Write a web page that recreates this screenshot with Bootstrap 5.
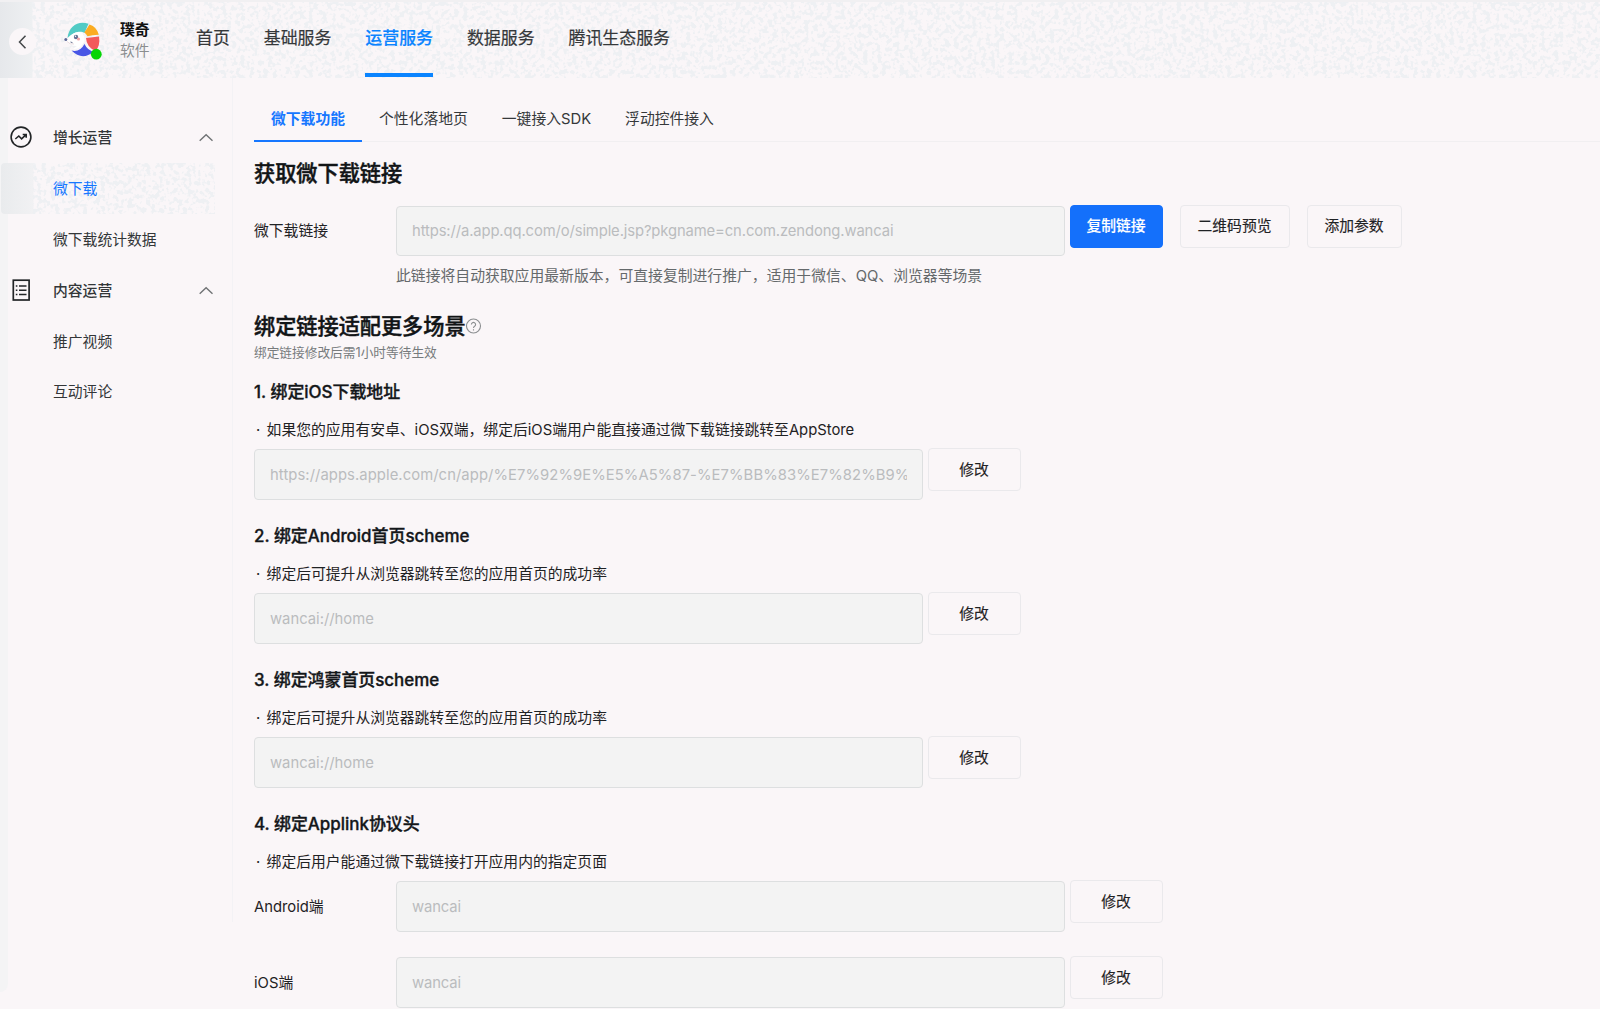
<!DOCTYPE html>
<html lang="zh-CN">
<head>
<meta charset="utf-8">
<meta name="viewport" content="width=device-width, initial-scale=1">
<title>微下载</title>
<link href="https://cdn.jsdelivr.net/npm/bootstrap@5.3.0/dist/css/bootstrap.min.css" rel="stylesheet">
<style>
body{font-family:Inter,"Noto Sans CJK SC",sans-serif;font-size:14.8px;line-height:22px;color:#1f2224;background:#faf6f8;height:1009px;overflow:hidden}
.topbar{height:78px;border-top:2px solid #f1f0f2;background:linear-gradient(90deg,#e6e8eb,#eef0f2 32px,transparent 33px)}
.grain{left:0;top:0;width:100%;height:100%;z-index:0}
.topbar>*:not(.grain){z-index:1}
.back-btn{width:27px;height:27px;margin-left:9px;margin-top:3px;background:#faf6f8}
.logo-box{width:40px;height:40px;margin-left:28px;margin-top:2px}
.app-name{margin-left:16px;width:76px;line-height:21px;padding-top:2px}
.app-name b{font-weight:700;color:#111}
.app-kind{color:#8b8e90}
.main-nav{gap:33.9px;font-size:16.93px}
.main-nav .nav-link{padding:0 0 3px;height:76px;line-height:73px;color:#35383a;margin:0;-webkit-text-stroke:.2px currentColor}
.main-nav .nav-link.active{color:#0a84ff;font-weight:500;border-bottom:4px solid #0a84ff;padding:0;height:75px}
.side{width:233px;height:844px;padding-top:34px;border-right:1px solid #f3f2f5}
.edge{left:0;top:78px;width:8px;bottom:17px;background:#f4f4f5;border-bottom-right-radius:8px;z-index:-1}
.side-row{height:50.8px;padding-left:53px;margin-right:17px;color:#333638}
.side-row span{padding-top:2px}
.side-head{padding-left:9px;padding-right:1px;font-weight:500}
.side-head .ico{width:24px;margin-right:20px}
.side-row.active{color:#1677ff;background:linear-gradient(90deg,#e9ebed,#f1f1f3 32px,transparent 33px);border-radius:4px;margin-left:1px;padding-left:52px}
.side-row.active span{z-index:1}
.page{padding-left:21px}
.sub-tabs{margin-top:17px;height:47px;border-bottom:1px solid #f1eff1}
.sub-tabs .nav-link{padding:0 17px;height:47px;line-height:48px;color:#35383a;border-radius:0}
.sub-tabs .nav-link.active{color:#1677ff;font-weight:700;border-bottom:2px solid #1677ff}
.title-lg{font-size:21.17px;font-weight:500;color:#111416;margin:0;line-height:32px;-webkit-text-stroke:.45px currentColor}
.title-lg svg{-webkit-text-stroke:0}
.title-first{height:63.5px;line-height:63px}
.title-second{margin-top:15px}
.row-field{height:50.5px}
.field-label{width:142px;padding-top:1px}
.field-box.form-control{width:669px;height:50.5px;padding:1px 15px 0;font-size:14.8px;color:#babcbe;background:#f3f3f3;border:1px solid #dddfe0;border-radius:4px;margin-right:4.5px}
.url-tight{letter-spacing:-.115px}
.url-wide{letter-spacing:.075px}
.act{height:43px;width:93px;padding:0;font-size:14.8px;border-radius:4px;border:1px solid #eae9ec;color:#1f2224;background:transparent;margin-top:-.6px;-webkit-text-stroke:.15px currentColor}
.act-main{background:#1470fb;border-color:#1470fb;color:#fff;font-weight:500}
.act-qr{width:110px;margin-left:17px}
.act-add{width:95px;margin-left:17px}
.hint{height:39px;line-height:40px;margin-left:142px;color:#65696b;letter-spacing:.03px}
.note{font-size:12.7px;line-height:21px;height:20px;color:#777b7d}
.step{font-size:16.93px;font-weight:500;line-height:30px;margin:21.5px 0 4px;color:#14171a;-webkit-text-stroke:.35px currentColor}
.note+.step{margin-top:15px}
.tip{height:38px;line-height:38px;white-space:pre}
.tip i{display:inline-block;width:12.6px;padding-left:2px;font-style:normal}
.row-gap-top{margin-top:25.5px}
</style>
</head>
<body>
<svg width="0" height="0" class="position-absolute">
  <filter id="speck" x="0" y="0" width="100%" height="100%" color-interpolation-filters="sRGB">
    <feTurbulence type="fractalNoise" baseFrequency="0.22" numOctaves="2" seed="4"/>
    <feColorMatrix values="0 0 0 0 .933  0 0 0 0 .941  0 0 0 0 .953  9 0 0 0 -4.4"/>
  </filter>
</svg>
<header class="topbar d-flex position-relative">
  <svg class="grain position-absolute"><rect x="32" width="100%" height="100%" filter="url(#speck)"/></svg>
  <div class="d-flex align-items-center position-relative">
    <a href="#" class="back-btn rounded-circle d-flex align-items-center justify-content-center"><svg width="12" height="16" viewBox="0 0 12 16" fill="none" stroke="#444749" stroke-width="1.5"><path d="M8.500 1.800 2.500 8l6 6.200"/></svg></a>
    <svg class="logo-box" viewBox="0 0 40 40">
      <path d="M3.500 17C5 5 14-.5 24.500 2.800L20.500 12C16 9 8 12 3.500 17Z" fill="#52cbc5"/>
      <path d="M25.500 3.500Q33 6 34.800 13.800Q28 14 23.500 15.300Q22 12.500 20.300 11.500Z" fill="#fbac22"/>
      <path d="M22 17 35 15.500q1.500 9-3.500 14.500Q22.500 26 22 17Z" fill="#f3595b"/>
      <path d="M7.500 29.500Q16 31.500 20.500 23 23 28.500 29.500 31 18 40 7.500 29.500Z" fill="#4856e5"/>
      <path d="M3.500 18.500C8 12 14 9 18.500 12.500 23.500 19 18 28.500 9 28L13 25Q5 25 2.500 20Z" fill="#fff"/>
      <path d="M3 20.500Q6 24 10 23" fill="none" stroke="#dfcbd0" stroke-width=".7"/>
      <circle cx="1.800" cy="18.500" r="1.500" fill="#5d6998"/><circle cx="12" cy="16" r="2.200" fill="#667194"/><circle cx="11.500" cy="15.300" r=".7" fill="#fff"/><path d="m6.500 21 2 .7" stroke="#66708f"/><circle cx="14.500" cy="18" r="1.600" fill="#f3a5a9"/>
      <circle cx="32.300" cy="33.200" r="5.400" fill="#06d506"/>
    </svg>
    <div class="app-name"><b>璞奇</b><div class="app-kind">软件</div></div>
  </div>
  <nav class="nav main-nav position-relative">
    <a class="nav-link" href="#">首页</a><a class="nav-link" href="#">基础服务</a><a class="nav-link active" href="#">运营服务</a><a class="nav-link" href="#">数据服务</a><a class="nav-link" href="#">腾讯生态服务</a>
  </nav>
</header>
<div class="edge position-absolute"></div>
<div class="d-flex">
  <aside class="side flex-shrink-0">
    <div class="side-row side-head d-flex align-items-center">
      <svg class="ico" height="24" viewBox="0 0 24 24" fill="none" stroke="#222527" stroke-width="1.600"><circle cx="12" cy="12" r="9.900"/><path d="m6.300 14 3.500-3 2.800 2.800 4.200-4M13.700 9.500h3.500v3.300"/></svg>
      <span>增长运营</span>
      <svg class="ms-auto" width="16" height="16" viewBox="0 0 16 16" fill="none" stroke="#707375" stroke-width="1.400"><path d="m1.700 11.800 6.400-6 6.400 6"/></svg>
    </div>
    <div class="side-row active d-flex align-items-center position-relative"><svg class="grain position-absolute"><rect x="32" width="100%" height="100%" filter="url(#speck)"/></svg><span class="position-relative">微下载</span></div>
    <div class="side-row d-flex align-items-center"><span>微下载统计数据</span></div>
    <div class="side-row side-head d-flex align-items-center">
      <svg class="ico" height="24" viewBox="0 0 24 24" fill="none" stroke="#222527" stroke-width="1.700"><rect x="4.300" y="2.200" width="15.800" height="19.800"/><path stroke-width="1.500" d="M10 8h7.500M10 12.300h7.500M10 16.600h7.500M6.800 8h1.600M6.800 12.300h1.600M6.800 16.600h1.600"/></svg>
      <span>内容运营</span>
      <svg class="ms-auto" width="16" height="16" viewBox="0 0 16 16" fill="none" stroke="#707375" stroke-width="1.400"><path d="m1.700 11.800 6.400-6 6.400 6"/></svg>
    </div>
    <div class="side-row d-flex align-items-center"><span>推广视频</span></div>
    <div class="side-row d-flex align-items-center"><span>互动评论</span></div>
  </aside>
  <main class="page flex-grow-1">
    <nav class="nav sub-tabs">
      <a class="nav-link active" href="#">微下载功能</a><a class="nav-link" href="#">个性化落地页</a><a class="nav-link" href="#">一键接入SDK</a><a class="nav-link" href="#">浮动控件接入</a>
    </nav>
    <h2 class="title-lg title-first">获取微下载链接</h2>
    <div class="row-field d-flex align-items-start">
      <label class="field-label align-self-center">微下载链接</label>
      <input class="form-control field-box url-tight" disabled value="https://a.app.qq.com/o/simple.jsp?pkgname=cn.com.zendong.wancai">
      <button class="btn act act-main">复制链接</button>
      <button class="btn act act-qr">二维码预览</button>
      <button class="btn act act-add">添加参数</button>
    </div>
    <div class="hint">此链接将自动获取应用最新版本，可直接复制进行推广，适用于微信、QQ、浏览器等场景</div>
    <h2 class="title-lg title-second d-flex align-items-center">绑定链接适配更多场景<svg width="16" height="16" viewBox="0 0 16 16" fill="none" stroke="#8b8e90" stroke-width="1.100"><circle cx="7.500" cy="8" r="7"/><path d="M5.400 6.500a2.100 2.100 0 1 1 3.200 1.800Q7.500 9 7.500 10M7.500 11.200v1.200"/></svg></h2>
    <div class="note">绑定链接修改后需1小时等待生效</div>

    <h3 class="step">1. 绑定iOS下载地址</h3>
    <div class="tip"><i>·</i>如果您的应用有安卓、iOS双端，绑定后iOS端用户能直接通过微下载链接跳转至AppStore</div>
    <div class="row-field d-flex align-items-start">
      <input class="form-control field-box url-wide" disabled value="https://apps.apple.com/cn/app/%E7%92%9E%E5%A5%87-%E7%BB%83%E7%82%B9%">
      <button class="btn act">修改</button>
    </div>

    <h3 class="step">2. 绑定Android首页scheme</h3>
    <div class="tip"><i>·</i>绑定后可提升从浏览器跳转至您的应用首页的成功率</div>
    <div class="row-field d-flex align-items-start">
      <input class="form-control field-box" disabled value="wancai://home">
      <button class="btn act">修改</button>
    </div>

    <h3 class="step">3. 绑定鸿蒙首页scheme</h3>
    <div class="tip"><i>·</i>绑定后可提升从浏览器跳转至您的应用首页的成功率</div>
    <div class="row-field d-flex align-items-start">
      <input class="form-control field-box" disabled value="wancai://home">
      <button class="btn act">修改</button>
    </div>

    <h3 class="step">4. 绑定Applink协议头</h3>
    <div class="tip"><i>·</i>绑定后用户能通过微下载链接打开应用内的指定页面</div>
    <div class="row-field d-flex align-items-start">
      <label class="field-label align-self-center">Android端</label>
      <input class="form-control field-box url-tight" disabled value="wancai">
      <button class="btn act">修改</button>
    </div>
    <div class="row-field row-gap-top d-flex align-items-start">
      <label class="field-label align-self-center">iOS端</label>
      <input class="form-control field-box url-tight" disabled value="wancai">
      <button class="btn act">修改</button>
    </div>
  </main>
</div>
<script src="https://cdn.jsdelivr.net/npm/bootstrap@5.3.0/dist/js/bootstrap.bundle.min.js"></script>
</body>
</html>
